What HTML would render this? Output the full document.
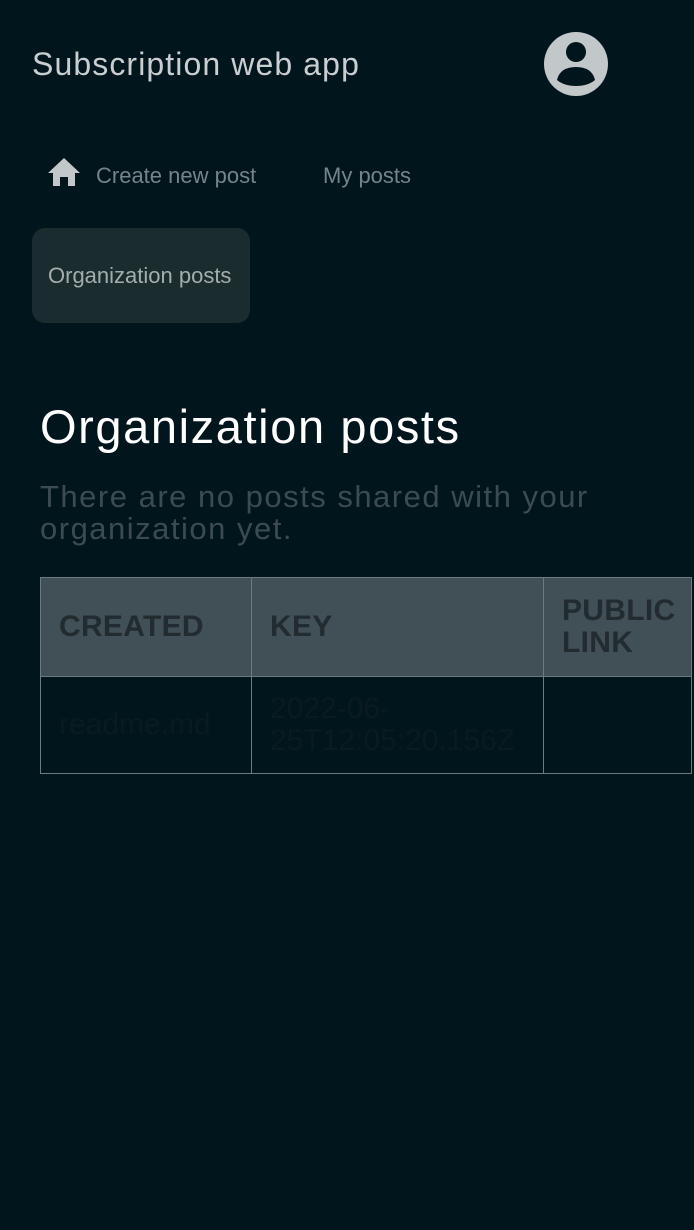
<!DOCTYPE html>
<html><head><meta charset="utf-8"><style>
*{margin:0;padding:0;box-sizing:border-box}
html,body{width:694px;height:1230px;background:#01151c;overflow:hidden;font-family:"Liberation Sans",sans-serif}
.a{position:absolute;white-space:nowrap}
table{position:absolute;left:40px;top:577px;width:652px;border-collapse:collapse}
td,th{border:1.5px solid #6d7a7e;text-align:left;padding:0 0 0 18px;vertical-align:middle}
th{background:#415056;color:#222b2f;font-size:30px;font-weight:bold;height:99px;line-height:32px;letter-spacing:0.3px}
td{height:97px;color:#0a1a21;font-size:30px;line-height:32px;background:#01151c}
</style></head><body>
<div class="a" style="left:32px;top:46px;font-size:32px;color:#c9cfd0;letter-spacing:1.1px">Subscription web app</div>
<svg class="a" style="left:544px;top:32px" width="64" height="64" viewBox="0 0 64 64">
<ellipse cx="32" cy="32" rx="32" ry="32" fill="#c2c8c9"/>
<circle cx="32" cy="20" r="10" fill="#01151c"/>
<path d="M13 48 Q16 35 32 35 Q48 35 51 48 Q44 54 32 54 Q20 54 13 48Z" fill="#01151c"/>
</svg>
<svg class="a" style="left:48px;top:158px" width="32" height="30" viewBox="0 0 32 30"><path d="M16 0 L32 15 L27 15 L27 28 L20 28 L20 19 L12 19 L12 28 L5 28 L5 15 L0 15Z" fill="#c2c8c9"/></svg>
<div class="a" style="left:96px;top:163px;font-size:22px;color:#76838a">Create new post</div>
<div class="a" style="left:323px;top:163px;font-size:22px;color:#76838a">My posts</div>
<div class="a" style="left:32px;top:228px;width:218px;height:95px;background:#1b2c2f;border-radius:13px"></div>
<div class="a" style="left:48px;top:263px;font-size:22px;color:#a3adaf">Organization posts</div>
<div class="a" style="left:40px;top:399px;font-size:47px;color:#fff;letter-spacing:1.6px">Organization posts</div>
<div class="a" style="left:40px;top:481px;font-size:31px;line-height:32px;color:#3c4b52;letter-spacing:1.5px">There are no posts shared with your<br>organization yet.</div>
<table><tr><th style="width:211px">CREATED</th><th style="width:292px">KEY</th><th>PUBLIC<br>LINK</th></tr>
<tr><td>readme.md</td><td>2022-06-<br>25T12:05:20.156Z</td><td></td></tr></table>
</body></html>
